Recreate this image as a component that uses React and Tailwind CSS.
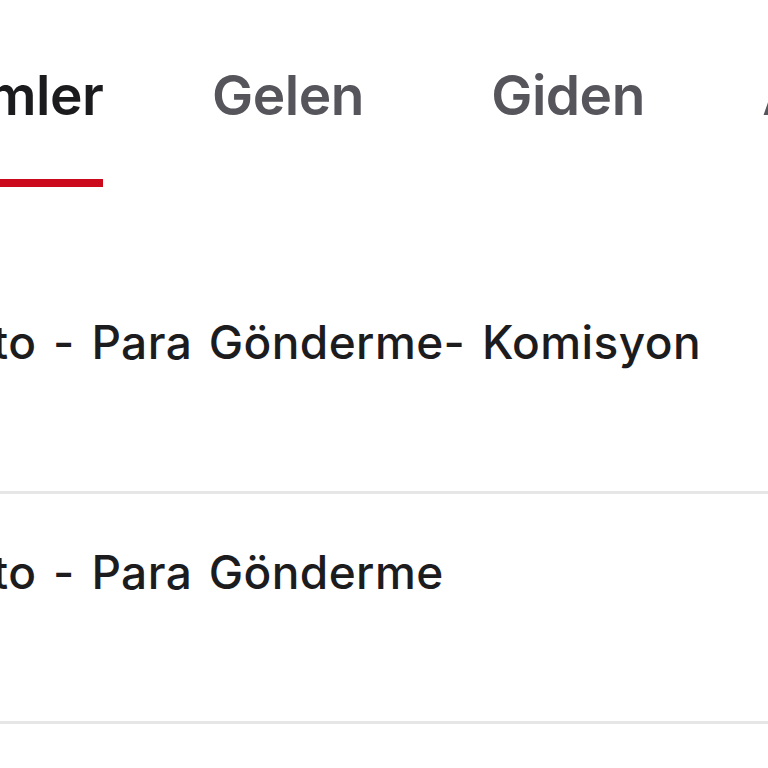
import React from 'react';

const tabs = [
  { label: 'İşlemler', active: true },
  { label: 'Gelen' },
  { label: 'Giden' },
  { label: 'Arama' },
];

const rows = [
  'Kripto - Para Gönderme- Komisyon',
  'Kripto - Para Gönderme',
];

const Tab = ({ label, active }) => (
  <div className={`w-[280px] shrink-0 flex justify-center ${active ? 'pr-[16px]' : ''}`}>
    <div className="flex flex-col">
      <span
        className={`text-[55px] leading-[55px] font-semibold tracking-[-0.5px] ${
          active ? 'text-[#1b1b1d]' : 'text-[#55555b]'
        }`}
      >
        {label}
      </span>
      <div className={`mt-[56px] h-2 w-full ${active ? 'bg-[#cc0a1e]' : 'bg-transparent'}`} />
    </div>
  </div>
);

export default function App() {
  return (
    <div
      className="w-[768px] h-[768px] overflow-hidden bg-white"
      style={{ fontFamily: 'Inter, "Noto Sans", sans-serif' }}
    >
      {/* Tabs */}
      <div className="flex ml-[-132px] pt-[68px]">
        {tabs.map(t => (
          <Tab key={t.label} {...t} />
        ))}
      </div>

      {/* Transactions */}
      <div className="mt-[77px]">
        {rows.map(r => (
          <div key={r} className="h-[230px] pt-[56px] border-b-[3px] border-[#e6e6e6]">
            <p className="ml-[-99px] whitespace-nowrap text-[46px] leading-[45px] font-medium tracking-[0.4px] [word-spacing:4px] text-[#1c1c1e]">
              {r}
            </p>
          </div>
        ))}
      </div>
    </div>
  );
}
